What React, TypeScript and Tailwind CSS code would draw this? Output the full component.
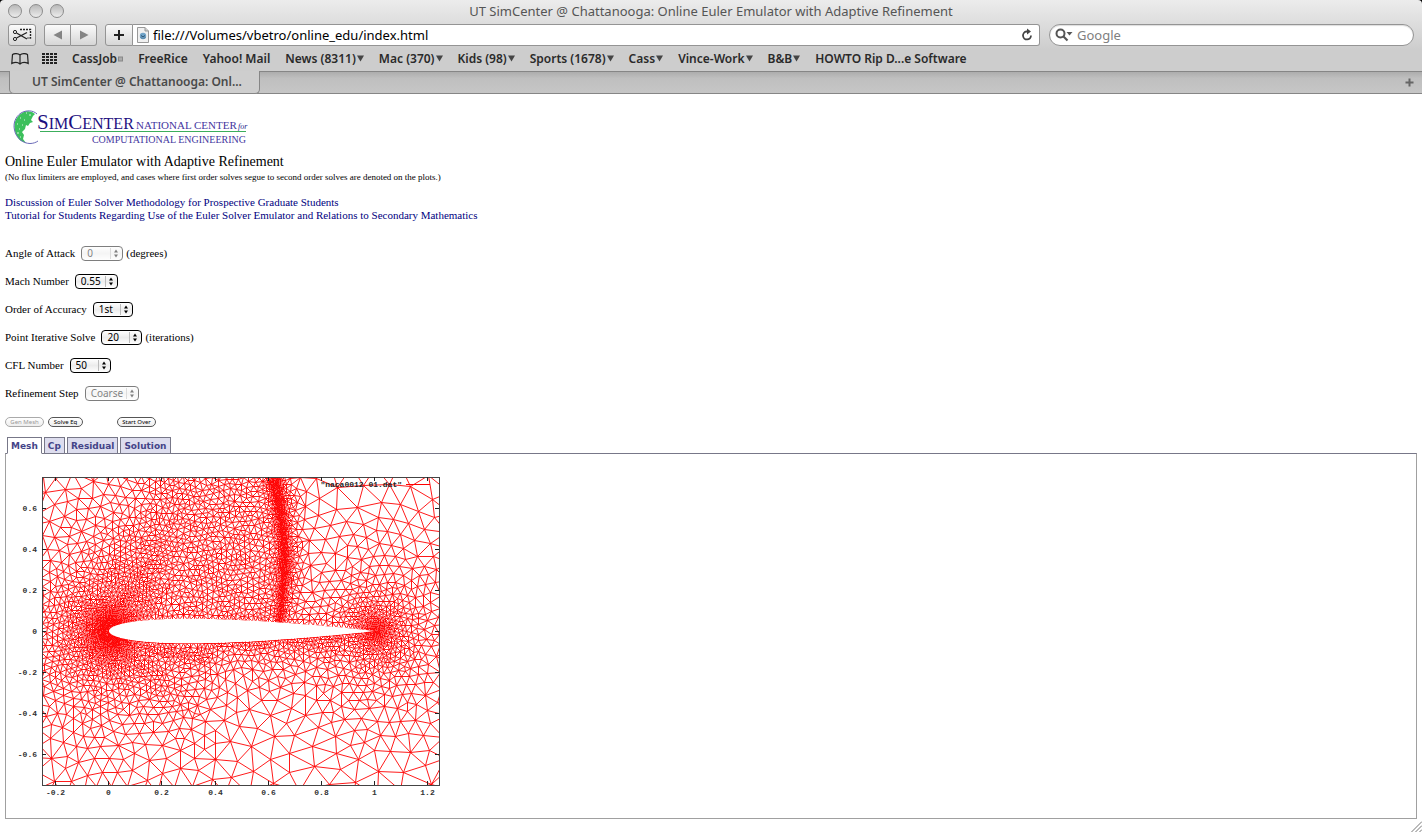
import React, { useState } from "react";

/* ------------------------------------------------------------------ */
/* Mesh generation                                                     */
/* ------------------------------------------------------------------ */

type Pt = [number, number];

const PLOT = { left: 36, top: 17, width: 397, height: 308 };
const CHORD_START = 103;
const CHORD = 266;
const AXIS_Y = 171;
const Y_UNIT = 205;

function mulberry(seed: number) {
  let a = seed;
  return () => {
    a = (a + 0x6d2b79f5) | 0;
    let t = Math.imul(a ^ (a >>> 15), 1 | a);
    t = (t + Math.imul(t ^ (t >>> 7), 61 | t)) ^ t;
    return ((t ^ (t >>> 14)) >>> 0) / 4294967296;
  };
}

function thickness(t: number) {
  if (t <= 0 || t >= 1) return 0;
  return (
    0.6 * (0.2969 * Math.sqrt(t) - 0.126 * t - 0.3516 * t * t + 0.2843 * t ** 3 - 0.1036 * t ** 4) * Y_UNIT
  );
}

function segment(x: number, y: number, a: Pt, b: Pt): [number, number] {
  const dx = b[0] - a[0];
  const dy = b[1] - a[1];
  const t = Math.max(0, Math.min(1, ((x - a[0]) * dx + (y - a[1]) * dy) / (dx * dx + dy * dy)));
  return [Math.hypot(x - a[0] - t * dx, y - a[1] - t * dy), t];
}

const SHOCK: [number, number, number][] = [
  [257, -20, 4],
  [267, 17, 4],
  [273, 45, 3],
  [277, 80, 2],
  [278, 110, 2],
  [275, 140, 1],
  [273, 163, 0],
];

function spacing(x: number, y: number) {
  let h = 22;
  const behind = x > 278 && y < AXIS_Y;
  const le = Math.hypot(x - CHORD_START - 2, y - AXIS_Y);
  h = Math.min(h, 1.2 + Math.max(0, le - 12) * 0.09);
  const te = Math.hypot(x - CHORD_START - CHORD, y - AXIS_Y);
  h = Math.min(h, 1.4 + Math.max(0, te - 3) * 0.11);
  const [dc] = segment(x, y, [CHORD_START, AXIS_Y], [CHORD_START + CHORD, AXIS_Y]);
  h = Math.min(h, (behind ? 5 : 3.4) + Math.max(0, dc - 10) * (behind ? 0.17 : 0.14));
  const [du, tu] = segment(x, y, [108, 162], [172, 50]);
  h = Math.min(h, 2.3 + tu * 2.7 + Math.min(du, 30) * 0.04 + Math.max(0, du - 30) * 0.09);
  const [dl, tl] = segment(x, y, [106, 178], [170, 235]);
  h = Math.min(h, 1.9 + tl * 3.6 + Math.min(dl, 14) * 0.06 + Math.max(0, dl - 14) * 0.13);
  const [dm] = segment(x, y, [130, 188], [195, 196]);
  h = Math.min(h, 3.2 + dm * 0.15);
  const bx = Math.max(150 - x, x - 272, 0);
  const by = Math.max(y - 165, 0);
  const grow = x > 272 ? 0.4 : 0.1;
  h = Math.min(h, 5.2 + bx * grow + by * 0.2);
  for (let i = 1; i < SHOCK.length; i++) {
    const p = SHOCK[i - 1];
    const q = SHOCK[i];
    const [d, t] = segment(x, y, [p[0], p[1]], [q[0], q[1]]);
    const w = p[2] + (q[2] - p[2]) * t;
    h = Math.min(h, 1.2 + Math.max(0, d - w) * 0.33);
  }
  return h > 6 ? 6 + (h - 6) * 1.2 : h;
}

function samplePoints(): { pts: Pt[]; fixed: number } {
  const rnd = mulberry(12);
  const x0 = PLOT.left - 30;
  const y0 = PLOT.top - 30;
  const x1 = PLOT.left + PLOT.width + 30;
  const y1 = PLOT.top + PLOT.height + 30;
  const cell = 4;
  const cols = Math.ceil((x1 - x0) / cell) + 1;
  const rows = Math.ceil((y1 - y0) / cell) + 1;
  const grid: number[][] = Array.from({ length: cols * rows }, () => []);
  const pts: Pt[] = [];
  const add = (x: number, y: number) => {
    grid[Math.floor((y - y0) / cell) * cols + Math.floor((x - x0) / cell)].push(pts.length);
    pts.push([x, y]);
  };
  for (const side of [-1, 1]) {
    let x = side < 0 ? CHORD_START : CHORD_START + 0.4;
    while (x < CHORD_START + CHORD) {
      const y = AXIS_Y + side * thickness((x - CHORD_START) / CHORD);
      add(x, y);
      x += spacing(x, y) * (x < CHORD_START + 8 ? 0.4 : 0.95);
    }
  }
  add(CHORD_START + CHORD, AXIS_Y);
  const fixed = pts.length;
  const fits = (x: number, y: number) => {
    if (x < x0 || y < y0 || x >= x1 || y >= y1) return false;
    const th = thickness((x - CHORD_START) / CHORD);
    if (th > 0 && Math.abs(y - AXIS_Y) < th + 0.5) return false;
    const r = spacing(x, y) * 0.84;
    const n = Math.ceil(r / cell);
    const cx = Math.floor((x - x0) / cell);
    const cy = Math.floor((y - y0) / cell);
    for (let j = Math.max(0, cy - n); j <= Math.min(rows - 1, cy + n); j++)
      for (let i = Math.max(0, cx - n); i <= Math.min(cols - 1, cx + n); i++)
        for (const k of grid[j * cols + i])
          if ((pts[k][0] - x) ** 2 + (pts[k][1] - y) ** 2 < r * r) return false;
    return true;
  };
  const active = pts.map((_, i) => i);
  while (active.length && pts.length < 14000) {
    const a = Math.floor(rnd() * active.length);
    const [px, py] = pts[active[a]];
    const r = spacing(px, py) * 0.86;
    let found = false;
    for (let k = 0; k < 16; k++) {
      const ang = rnd() * Math.PI * 2;
      const d = r * (1 + rnd() * 0.6);
      const x = px + Math.cos(ang) * d;
      const y = py + Math.sin(ang) * d;
      if (fits(x, y)) {
        active.push(pts.length);
        add(x, y);
        found = true;
        break;
      }
    }
    if (!found) {
      active[a] = active[active.length - 1];
      active.pop();
    }
  }
  return { pts, fixed };
}

interface Tri {
  v: [number, number, number];
  x: number;
  y: number;
  r: number;
}

function circum(p: Pt[], i: number, j: number, k: number): Tri {
  const [ax, ay] = p[i];
  const bx = p[j][0] - ax;
  const by = p[j][1] - ay;
  const cx = p[k][0] - ax;
  const cy = p[k][1] - ay;
  const d = 2 * (bx * cy - by * cx) || 1e-9;
  const b2 = bx * bx + by * by;
  const c2 = cx * cx + cy * cy;
  const ux = (cy * b2 - by * c2) / d;
  const uy = (bx * c2 - cx * b2) / d;
  return { v: [i, j, k], x: ax + ux, y: ay + uy, r: ux * ux + uy * uy };
}

/* Sweep-ordered Bowyer-Watson Delaunay triangulation. */
function delaunay(points: Pt[]): [number, number][] {
  const n = points.length;
  const p: Pt[] = [...points, [-4000, -3000], [200, 8000], [4500, -3000]];
  const order = points.map((_, i) => i).sort((a, b) => p[a][0] - p[b][0]);
  const open: Tri[] = [circum(p, n, n + 1, n + 2)];
  const closed: Tri[] = [];
  for (const c of order) {
    const [x, y] = p[c];
    const edges: number[] = [];
    for (let i = open.length - 1; i >= 0; i--) {
      const t = open[i];
      const dx = x - t.x;
      const dy = y - t.y;
      const done = dx > 0 && dx * dx > t.r;
      if (!done && dx * dx + dy * dy > t.r) continue;
      if (done) closed.push(t);
      else edges.push(t.v[0], t.v[1], t.v[1], t.v[2], t.v[2], t.v[0]);
      open[i] = open[open.length - 1];
      open.pop();
    }
    const m = edges.length / 2;
    for (let i = 0; i < m; i++) {
      let shared = false;
      for (let j = 0; j < m && !shared; j++) {
        if (i === j) continue;
        const same = edges[2 * i] === edges[2 * j] && edges[2 * i + 1] === edges[2 * j + 1];
        const flip = edges[2 * i] === edges[2 * j + 1] && edges[2 * i + 1] === edges[2 * j];
        shared = same || flip;
      }
      if (!shared) open.push(circum(p, edges[2 * i], edges[2 * i + 1], c));
    }
  }
  const seen = new Set<number>();
  const out: [number, number][] = [];
  for (const t of closed.concat(open)) {
    if (t.v.some((q) => q >= n)) continue;
    for (let k = 0; k < 3; k++) {
      const a = Math.min(t.v[k], t.v[(k + 1) % 3]);
      const b = Math.max(t.v[k], t.v[(k + 1) % 3]);
      const key = a * 20000 + b;
      if (!seen.has(key)) {
        seen.add(key);
        out.push([a, b]);
      }
    }
  }
  return out;
}

function buildMesh(): string {
  const { pts, fixed } = samplePoints();
  const edges = delaunay(pts);
  const sum = pts.map(() => [0, 0, 0]);
  for (const [a, b] of edges) {
    sum[a][0] += pts[b][0];
    sum[a][1] += pts[b][1];
    sum[a][2]++;
    sum[b][0] += pts[a][0];
    sum[b][1] += pts[a][1];
    sum[b][2]++;
  }
  for (let i = fixed; i < pts.length; i++) {
    const [sx, sy, c] = sum[i];
    if (c) pts[i] = [pts[i][0] * 0.5 + (sx / c) * 0.5, pts[i][1] * 0.5 + (sy / c) * 0.5];
  }
  return edges
    .map(([a, b]) => `M${pts[a].map(Math.round).join(" ")}L${pts[b].map(Math.round).join(" ")}`)
    .join("");
}

function airfoilPath(): string {
  const up: string[] = [];
  const low: string[] = [];
  for (let i = 0; i <= 100; i++) {
    const t = (i / 100) ** 2;
    const x = (CHORD_START + t * CHORD).toFixed(1);
    up.push(`${x} ${(AXIS_Y - thickness(t)).toFixed(1)}`);
    low.unshift(`${x} ${(AXIS_Y + thickness(t)).toFixed(1)}`);
  }
  return `M${up.concat(low).join("L")}Z`;
}

const MESH = buildMesh();
const AIRFOIL = airfoilPath();
const X_TICKS = ["-0.2", "0", "0.2", "0.4", "0.6", "0.8", "1", "1.2"];
const Y_TICKS = ["0.6", "0.4", "0.2", "0", "-0.2", "-0.4", "-0.6"];

function MeshPlot() {
  const right = PLOT.left + PLOT.width;
  const bottom = PLOT.top + PLOT.height;
  return (
    <svg width="440" height="341" viewBox="0 0 440 341" role="img" aria-label="Mesh" className="block font-['Liberation_Mono',monospace]">
      <defs>
        <clipPath id="plot">
          <rect x={PLOT.left} y={PLOT.top} width={PLOT.width} height={PLOT.height} />
        </clipPath>
      </defs>
      <g clipPath="url(#plot)">
        <path d={MESH} transform="translate(0.5 0.5)" stroke="#ff0000" strokeWidth="0.9" fill="none" />
        <path d={AIRFOIL} fill="#fff" />
      </g>
      <rect x={PLOT.left + 0.5} y={PLOT.top + 0.5} width={PLOT.width} height={PLOT.height} fill="none" stroke="#444" />
      {X_TICKS.map((t, i) => {
        const x = Math.round(49 + i * 53.2) + 0.5;
        return (
          <g key={t}>
            <path d={`M${x} ${bottom}v-4M${x} ${PLOT.top}v4`} stroke="#222" />
            <text x={x} y="335" fontSize="8" fontWeight="bold" textAnchor="middle" fill="#333">{t}</text>
          </g>
        );
      })}
      {Y_TICKS.map((t, i) => {
        const y = Math.round(48 + i * 41) + 0.5;
        return (
          <g key={t}>
            <path d={`M${PLOT.left} ${y}h4M${right} ${y}h-4`} stroke="#222" />
            <text x="31" y={y + 2.5} fontSize="8" fontWeight="bold" textAnchor="end" fill="#333">{t}</text>
          </g>
        );
      })}
      <text x="396" y="27" fontSize="8" fontWeight="bold" textAnchor="end" fill="#222">"naca0012 01.dat"</text>
      <path d="M400 24.500h24" stroke="#ff0000" />
    </svg>
  );
}

/* ------------------------------------------------------------------ */
/* Browser chrome                                                      */
/* ------------------------------------------------------------------ */

const BOOKMARKS: { label: string; mark?: "menu" | "box" }[] = [
  { label: "CassJob", mark: "box" },
  { label: "FreeRice" },
  { label: "Yahoo! Mail" },
  { label: "News (8311)", mark: "menu" },
  { label: "Mac (370)", mark: "menu" },
  { label: "Kids (98)", mark: "menu" },
  { label: "Sports (1678)", mark: "menu" },
  { label: "Cass", mark: "menu" },
  { label: "Vince-Work", mark: "menu" },
  { label: "B&B", mark: "menu" },
  { label: "HOWTO Rip D...e Software" },
];

const toolButton =
  "flex h-[22px] items-center justify-center border border-[#949494] bg-linear-to-b from-[#fbfbfb] to-[#d6d6d6]";

function Chrome() {
  return (
    <header className="font-['Noto_Sans',sans-serif]">
      <div className="rounded-t-sm border-b border-[#868686] bg-linear-to-b from-[#ececec] to-[#cdcdcd] to-70%">
        <div className="relative flex h-6 items-center justify-center pb-0.5">
          <div className="absolute left-2 top-1 flex gap-[7px]">
            {["Close", "Minimize", "Zoom"].map((n) => (
              <button
                key={n}
                aria-label={n}
                className="size-3.5 rounded-full border border-[#8c8c8c] bg-linear-to-b from-[#b9b9b9] to-[#ececec]"
              />
            ))}
          </div>
          <div className="text-[13px] leading-4 text-[#555]">
            UT SimCenter @ Chattanooga: Online Euler Emulator with Adaptive Refinement
          </div>
        </div>
        <div className="flex h-[22px] px-2">
          <button aria-label="Web clip" className={`${toolButton} w-7 rounded-[3px]`}>
            <svg width="20" height="16" viewBox="0 0 20 16" fill="none" stroke="#222">
              <path d="M8 2.500h10.500v8.500h-3" strokeDasharray="2 1" strokeWidth="1.400" />
              <path d="M4.500 6L15 12M4.500 11L15 5.500" strokeWidth="1.400" />
              <circle cx="3" cy="5" r="1.600" />
              <circle cx="3" cy="12" r="1.600" />
            </svg>
          </button>
          <button aria-label="Back" className={`${toolButton} ml-2 w-[27px] rounded-l-[3px]`}>
            <svg width="10" height="10" viewBox="0 0 10 10"><path d="M9 0.500v9L0.500 5z" fill="#848484" /></svg>
          </button>
          <button aria-label="Forward" className={`${toolButton} w-[26px] rounded-r-[3px] border-l-0`}>
            <svg width="10" height="10" viewBox="0 0 10 10"><path d="M1 0.500v9L9.500 5z" fill="#848484" /></svg>
          </button>
          <button aria-label="Add bookmark" className={`${toolButton} ml-2 w-7 rounded-l-[3px]`}>
            <svg width="12" height="12" viewBox="0 0 12 12"><path d="M6 1v10M1 6h10" stroke="#222" strokeWidth="2" /></svg>
          </button>
          <div className="flex min-w-0 flex-1 items-center rounded-r-[3px] border border-l-0 border-[#949494] bg-white pl-1 pr-1.5">
            <svg width="12" height="16" viewBox="0 0 12 16" className="shrink-0">
              <path d="M0.500 0.500h7.500l3.500 3.500v11.500h-11z" fill="#f0f0f0" stroke="#999" />
              <path d="M8 0.500V4h3.500" fill="#ccc" stroke="#999" />
              <circle cx="6" cy="9" r="3.200" fill="#6fa3c8" />
              <path d="M4 8.500l2 1.500 2-1.500M4 10.500l1 1M8 10.500l-1 1" stroke="#2b4f6e" fill="none" />
            </svg>
            <input
              aria-label="Address"
              defaultValue="file:///Volumes/vbetro/online_edu/index.html"
              className="min-w-0 flex-1 bg-transparent pl-1 text-[13px] leading-4 text-black outline-none"
            />
            <button aria-label="Reload">
              <svg width="12" height="14" viewBox="0 0 12 14" fill="none" stroke="#444" strokeWidth="1.800">
                <path d="M7 3.500H5.500A4 4 0 1 0 10 7.500" />
                <path d="M6 0.500v6L10 3.500z" fill="#444" stroke="none" />
              </svg>
            </button>
          </div>
          <label className="ml-[9px] flex w-[365px] items-center rounded-full border border-[#949494] bg-white pl-[5px] shadow-[inset_0_1px_1px_#ddd]">
            <svg width="18" height="14" viewBox="0 0 18 14" fill="none" stroke="#555">
              <circle cx="5.500" cy="5.500" r="4" strokeWidth="2" />
              <path d="M8.500 8.500l4 4" strokeWidth="2.200" />
              <path d="M11.500 4h6L14.500 7.500z" fill="#555" stroke="none" />
            </svg>
            <input
              aria-label="Search"
              placeholder="Google"
              className="min-w-0 flex-1 bg-transparent pl-1 text-[13px] leading-4 outline-none placeholder:text-[#808080]"
            />
          </label>
        </div>
        <nav className="flex h-[25px] items-center pl-[11px] text-[12px] leading-[18px] font-semibold text-[#2a2a2a]">
          <button aria-label="Show all bookmarks">
            <svg width="18" height="12" viewBox="0 0 18 12" fill="none" stroke="#222" strokeWidth="1.200">
              <path d="M9 2C7 0.200 3.500 0.200 1.500 1.500L0.800 10.500C3.500 9.200 7 9.300 9 11C11 9.300 14.500 9.200 17.200 10.500L16.500 1.500C14.500 0.200 11 0.200 9 2zM9 2v9" />
            </svg>
          </button>
          <button aria-label="Top sites" className="ml-[13px]">
            <svg width="15" height="11" viewBox="0 0 15 11" fill="#222">
              {[0, 3, 6, 9].map((y) => [0, 4, 8, 12].map((x) => <rect key={`${x}-${y}`} x={x} y={y} width="3" height="2" />))}
            </svg>
          </button>
          <div className="ml-[15px] flex gap-[15px] whitespace-nowrap">
            {BOOKMARKS.map(({ label, mark }) => (
              <a key={label} href="#" className="flex items-center gap-px">
                {label}
                {mark === "menu" && (
                  <svg width="7" height="7" viewBox="0 0 7 7"><path d="M0 0.500h7L3.500 6.500z" fill="#444" /></svg>
                )}
                {mark === "box" && (
                  <svg width="5" height="6" viewBox="0 0 5 6"><rect x="0.500" y="1" width="4" height="4" fill="#aaa" stroke="#888" /></svg>
                )}
              </a>
            ))}
          </div>
        </nav>
      </div>
      <div className="flex h-[22px] items-start justify-between border-b border-[#868686] bg-linear-to-b from-[#adadad] via-[#bfbfbf] via-30% to-[#c6c6c6] pl-[9px] pr-2">
        <button className="-mt-px h-[23px] w-[251px] rounded-b-[5px] border border-t-0 border-[#868686] bg-[#cecece] pl-[22px] text-left text-[12px] font-semibold text-[#4a4a4a]">
          UT SimCenter @ Chattanooga: Onl...
        </button>
        <button aria-label="New tab" className="mt-[6px]">
          <svg width="9" height="9" viewBox="0 0 9 9"><path d="M4.500 0.500v8M0.500 4.500h8" stroke="#666" strokeWidth="2" /></svg>
        </button>
      </div>
    </header>
  );
}

/* ------------------------------------------------------------------ */
/* Page                                                                */
/* ------------------------------------------------------------------ */

function Logo() {
  return (
    <svg width="236" height="38" viewBox="0 0 236 38" role="img" aria-label="SimCenter" className="block font-['Liberation_Serif',serif]">
      <path d="M9 4C3 8 1 13 1.500 19C2 25 5 30 8 32L13 34L10 30L11 26L9 23L12 20L13 16L15 17L17 14L20 13L18 11L20 7L22 5L19 3C15 1.500 12 2 9 4z" fill="#3cc05c" />
      <path d="M24 5C20 1 13 1 8 4C2 8 0 15 1.500 21C3 29 10 34.500 17 34.500C20 34.500 23 33.500 25 32" fill="none" stroke="#6a6ab8" strokeWidth="1" />
      <path d="M13 4h1M16 6h2M7 9h1M11 11h1M4 15h1M6 20h1M9 16h1M4 24h2M7 28h1" stroke="#d9f5df" strokeWidth="1.200" />
      <g fill="#241a8c">
        <text x="24" y="20" fontSize="21" fill="#1d0f80">S<tspan fontSize="16">IM</tspan>C<tspan fontSize="16">ENTER</tspan></text>
        <text x="123" y="20" fontSize="11" fill="#4436a0">NATIONAL CENTER</text>
        <text x="225" y="20" fontSize="8" fontStyle="italic">for</text>
        <text x="233" y="34" fontSize="10" textAnchor="end" fill="#4436a0">COMPUTATIONAL ENGINEERING</text>
      </g>
      <path d="M27 22.500H233" stroke="#3cae5c" />
    </svg>
  );
}

interface Field {
  id: string;
  label: string;
  value: string;
  options: string[];
  width: string;
  suffix?: string;
  disabled?: boolean;
}

const FIELDS: Field[] = [
  { id: "aoa", label: "Angle of Attack", value: "0", options: ["0", "1", "2"], width: "w-[42px]", suffix: "(degrees)", disabled: true },
  { id: "mach", label: "Mach Number", value: "0.55", options: ["0.55", "0.75", "0.95"], width: "w-[43px]" },
  { id: "order", label: "Order of Accuracy", value: "1st", options: ["1st", "2nd"], width: "w-10" },
  { id: "iters", label: "Point Iterative Solve", value: "20", options: ["10", "20", "50"], width: "w-[41px]", suffix: "(iterations)" },
  { id: "cfl", label: "CFL Number", value: "50", options: ["5", "50", "100"], width: "w-[41px]" },
  { id: "step", label: "Refinement Step", value: "Coarse", options: ["Coarse", "Medium", "Fine"], width: "w-[54px]", disabled: true },
];

function SelectRow({ field }: { field: Field }) {
  return (
    <div className="flex h-7 items-center">
      <label htmlFor={field.id}>{field.label}</label>
      <span className={`relative ml-1.5 flex ${field.disabled ? "opacity-50" : ""}`}>
        <select
          id={field.id}
          defaultValue={field.value}
          disabled={field.disabled}
          className={`${field.width} h-[15px] appearance-none rounded-[4px] border border-black bg-linear-to-b from-white via-[#ececec] to-white pl-[5px] font-['Noto_Sans',sans-serif] text-[10px] leading-[13px] text-black opacity-100`}
        >
          {field.options.map((o) => (
            <option key={o}>{o}</option>
          ))}
        </select>
        <svg width="13" height="15" viewBox="0 0 13 15" className="pointer-events-none absolute right-0 top-0">
          <path d="M0.500 2v11" stroke="#bbb" />
          <path d="M4 6.500h4L6 3.500zM4 8.500h4L6 11.500z" fill="#000" />
        </svg>
      </span>
      {field.suffix && <span className="ml-[3px]">{field.suffix}</span>}
    </div>
  );
}

const pill =
  "h-[10px] rounded-full border bg-linear-to-b from-white to-[#eee] font-['Noto_Sans',sans-serif] text-[6px] leading-[8px]";

const TABS = ["Mesh", "Cp", "Residual", "Solution"];

export default function App() {
  const [tab, setTab] = useState("Mesh");
  return (
    <div className="flex min-h-screen flex-col bg-black">
      <Chrome />
      <main className="relative flex-1 bg-white px-[5px] pb-[13px] pt-[15px] font-['Liberation_Serif',serif] text-[11px] leading-[13px] text-black">
        <div className="pl-2">
          <Logo />
        </div>
        <h1 className="mt-1.5 text-[14px] leading-[18px]">Online Euler Emulator with Adaptive Refinement</h1>
        <p className="text-[9px] leading-[13px]">
          (No flux limiters are employed, and cases where first order solves segue to second order solves are denoted on the plots.)
        </p>
        <div className="mt-3 flex flex-col items-start text-[#000080]">
          <a href="#">Discussion of Euler Solver Methodology for Prospective Graduate Students</a>
          <a href="#">Tutorial for Students Regarding Use of the Euler Solver Emulator and Relations to Secondary Mathematics</a>
        </div>
        <form className="mt-[17px]" onSubmit={(e) => e.preventDefault()}>
          {FIELDS.map((f) => (
            <SelectRow key={f.id} field={f} />
          ))}
          <div className="mt-[10px] flex">
            <button disabled className={`${pill} w-[39px] border-[#aaa] text-[#999]`}>Gen Mesh</button>
            <button className={`${pill} ml-1 w-[35px] border-[#555] text-black`}>Solve Eq</button>
            <button type="reset" className={`${pill} ml-[34px] w-[39px] border-[#555] text-black`}>Start Over</button>
          </div>
        </form>
        <div role="tablist" className="mt-[10px] flex gap-0.5 pl-0.5 font-['DejaVu_Sans',sans-serif] text-[9px] font-bold leading-[17px] text-[#444488]">
          {TABS.map((t) => (
            <button
              key={t}
              role="tab"
              aria-selected={tab === t}
              onClick={() => setTab(t)}
              className={`relative -mb-px h-[17px] border border-[#777788] px-[3px] ${
                tab === t ? "border-b-white bg-white" : "bg-[#ddddee]"
              }`}
            >
              {t}
            </button>
          ))}
        </div>
        <section className="border border-[#a0a0a0] border-t-[#777788] pb-[17px] pt-[6px]">
          <MeshPlot />
        </section>
        <svg width="11" height="11" viewBox="0 0 11 11" className="absolute bottom-0 right-0">
          <path d="M0.500 11L11 0.500M4.500 11L11 4.500M8.500 11L11 8.500" stroke="#777" />
        </svg>
      </main>
    </div>
  );
}
